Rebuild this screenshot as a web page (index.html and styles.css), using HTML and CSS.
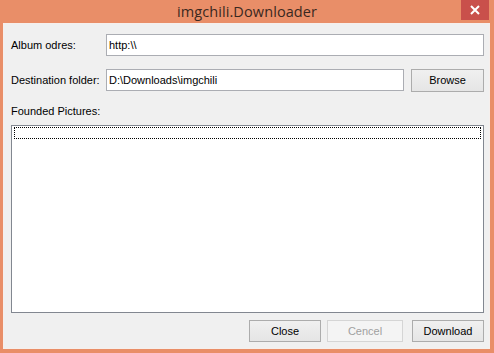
FILE: index.html
```html
<!DOCTYPE html>
<html>
<head>
<meta charset="utf-8">
<link rel="stylesheet" href="styles.css">
</head>
<body>
<div class="window">
  <div class="titlebar">
    <span class="title">imgchili.Downloader</span>
    <span class="close-btn"><svg width="10" height="10" viewBox="0 0 10 10"><path d="M1 1L9 9M9 1L1 9" stroke="#fff" stroke-width="2"/></svg></span>
  </div>
  <div class="client">
    <div class="row">
      <label class="lbl">Album odres:</label>
      <div class="input">http:\\</div>
    </div>
    <div class="row row2">
      <label class="lbl">Destination folder:</label>
      <div class="input">D:\Downloads\imgchili</div>
      <button class="btn browse">Browse</button>
    </div>
    <div class="section">Founded Pictures:</div>
    <div class="listbox"><div class="focus"></div></div>
    <div class="footer">
      <button class="btn">Close</button>
      <button class="btn disabled">Cencel</button>
      <button class="btn">Download</button>
    </div>
  </div>
</div>
</body>
</html>
```
FILE: styles.css
```css
html, body { margin: 0; padding: 0; }
body { width: 494px; height: 353px; overflow: hidden; font-family: "Liberation Sans", sans-serif; }
.window {
  width: 494px; height: 353px; background: #e98e68;
  display: flex; flex-direction: column; box-sizing: border-box;
}
.titlebar { height: 23px; position: relative; display: flex; justify-content: center; align-items: center; }
.title { font-family: "Open Sans", sans-serif; font-size: 14.5px; color: #3a2820; margin-top: -1px; letter-spacing: 0.1px; }
.close-btn {
  position: absolute; right: 5px; top: 0; width: 28px; height: 20px;
  background: #c9504b; display: flex; align-items: center; justify-content: center;
}
.client {
  flex: 1; margin: 0 4px 4px 3px; background: #f0f0f0;
  border: 1px solid #f6efec; box-sizing: border-box;
  padding: 10px 5px 0 7px; display: flex; flex-direction: column;
  font-family: "Liberation Sans", sans-serif; font-size: 11px; color: #000;
}
.row { display: flex; align-items: center; height: 22px; }
.row2 { margin-top: 13px; }
.lbl { width: 95px; flex: none; white-space: nowrap; }
.input {
  flex: 1; height: 22px; box-sizing: border-box; background: #fff;
  border: 1px solid #abadb3; padding: 0 2px; display: flex; align-items: center;
  white-space: nowrap;
}
.btn {
  height: 23px; width: 73px; box-sizing: border-box; border: 1px solid #acacac;
  background: linear-gradient(#f0f0f0, #e5e5e5); font-family: "Liberation Sans", sans-serif;
  font-size: 11px; color: #000; padding: 0; margin: 0;
}
.browse { margin-left: 7px; }
.section { margin-top: 14px; height: 13px; line-height: 13px; white-space: nowrap; }
.listbox {
  margin-top: 7px; height: 188px; box-sizing: border-box; background: #fff;
  border: 1px solid #828790; padding: 1px 2px;
}
.focus { height: 12px; border: 1px dotted #000; box-sizing: border-box; }
.footer { display: flex; justify-content: flex-end; gap: 6px; margin-top: 7px; }
.footer .btn { height: 22px; }
.footer .btn:first-child { width: 72px; }
.footer .btn:nth-child(2) { width: 76px; }
.footer .btn:last-child { width: 72px; margin-left: 3px; }
.disabled { color: #a0a0a0; border-color: #d5d5d5; background: #f4f4f4; }
```
